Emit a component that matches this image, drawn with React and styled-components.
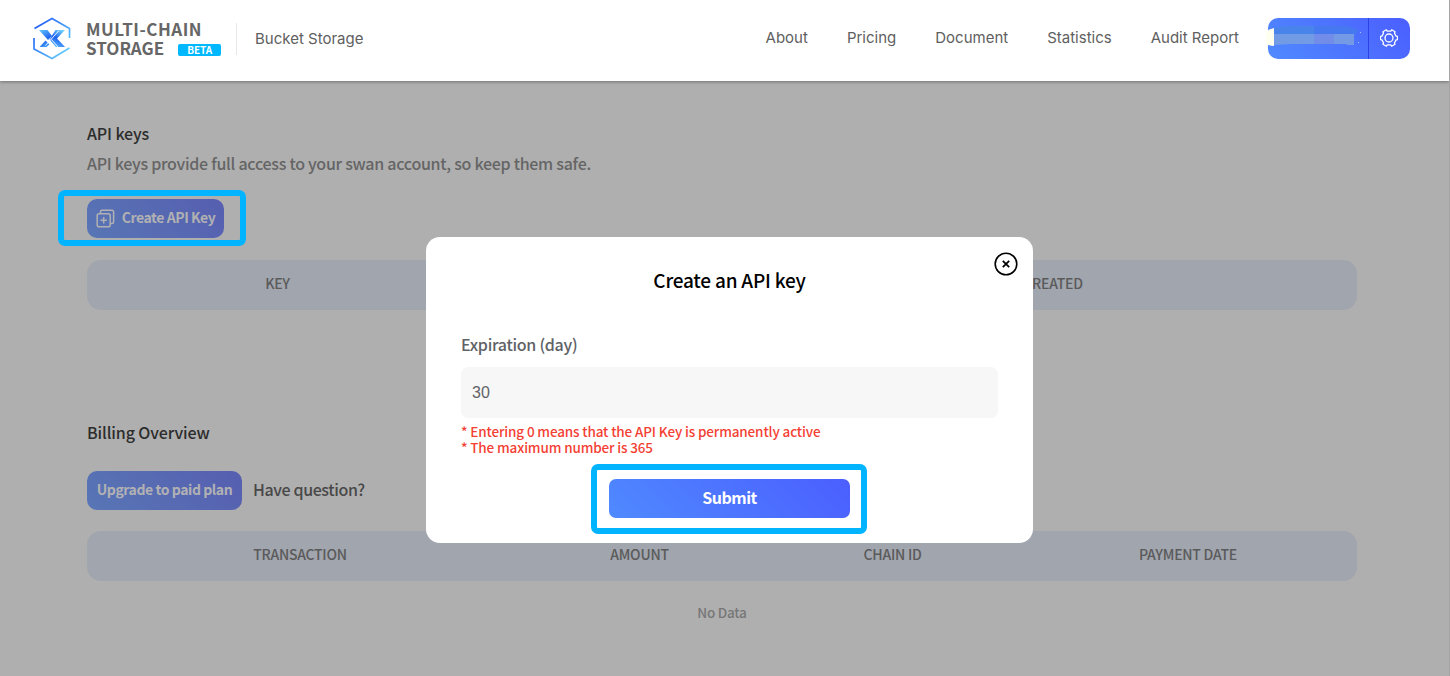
import React from "react";
import styled, { createGlobalStyle } from "styled-components";

const Global = createGlobalStyle`
  * { box-sizing: border-box; }
  body { margin: 0; background: #afafaf; font-family: "Noto Sans CJK SC", sans-serif; font-weight: 500; }
  h1, h2, p { margin: 0; font-weight: 500; }
`;

const Page = styled.div`
  position: relative;
  height: 676px;
  overflow: hidden;
  background: #afafaf;
  border-right: 1px solid #a3a3a3;
`;

const Header = styled.header`
  display: flex;
  align-items: center;
  height: 81px;
  padding: 0 39px 0 32px;
  background: #fff;
  box-shadow: 0 1px 3px rgba(0, 0, 0, 0.35);
  white-space: nowrap;
`;

const Logo = styled.svg`
  flex: none;
  width: 40px;
  height: 44px;
  margin-top: -4px;
`;

const Brand = styled.div`
  width: 150px;
  margin: -5px 0 0 14px;
  color: #666;
  font: 700 17px/19px "Noto Sans CJK SC", sans-serif;
`;

const BrandLine = styled.div`
  display: flex;
  align-items: center;
  height: 19px;
  letter-spacing: ${(p) => p.$track || 0}px;
`;

const Beta = styled.span`
  width: 43px;
  height: 12px;
  margin: 4px 0 0 14px;
  border-radius: 2px;
  background: #00b8ff;
  color: #fff;
  font-size: 10px;
  line-height: 11px;
  letter-spacing: -0.1px;
  text-align: center;
`;

const NavText = styled.span`
  color: #606060;
  font: 400 15px/20px Inter, sans-serif;
  letter-spacing: ${(p) => p.$track || 0}px;
`;

const Product = styled.div`
  display: flex;
  align-items: center;
  height: 32px;
  padding-left: 18px;
  border-left: 1px solid #e8e8e8;
  margin-top: -3px;
`;

const Nav = styled.nav`
  display: flex;
  gap: 39px;
  margin: -5px 29px 0 auto;
`;

const Account = styled.div`
  display: flex;
  width: 142px;
  height: 41px;
  margin-top: -4px;
  border-radius: 10px;
  background: linear-gradient(45deg, #4f8aff, #4b5eff);
`;

const Address = styled.div`
  width: 101px;
  border-right: 1px solid #2e40e8;
`;

const Mask = styled.svg`
  display: block;
  overflow: visible;
`;

const Settings = styled.div`
  display: flex;
  flex: 1;
  align-items: center;
  justify-content: center;
  padding: 0 1px 1px 0;
`;

const Main = styled.main`
  padding: 41px 92px 0 87px;
`;

const Heading = styled.h2`
  color: #2c2c2c;
  font-size: 16px;
  line-height: 22px;
  letter-spacing: ${(p) => p.$track || 0}px;
`;

const Lead = styled.p`
  margin-top: 8px;
  color: #656565;
  font-size: 16px;
  line-height: 22px;
  letter-spacing: ${(p) => p.$track || 0}px;
`;

const Row = styled.div`
  display: flex;
  align-items: center;
  gap: 11px;
  margin-top: ${(p) => p.$top}px;
`;

const Button = styled.div`
  position: relative;
  display: flex;
  align-items: center;
  justify-content: center;
  gap: 7px;
  width: ${(p) => p.$width}px;
  height: 39px;
  border-radius: ${(p) => (p.$bright ? 7 : 10)}px;
  background: ${(p) => p.$bright ? "linear-gradient(45deg, #4f8aff, #4b5eff)" : "linear-gradient(45deg, #5876b5, #565eb0)"};
  color: ${(p) => (p.$bright ? "#fff" : "#b1b1b3")};
  font-size: ${(p) => (p.$bright ? 16 : 14)}px;
  font-weight: 700;
  letter-spacing: ${(p) => p.$track || 0}px;
  white-space: nowrap;
`;

const ButtonText = styled.span`
  padding-bottom: 3px;
`;

const Highlight = styled.div`
  position: absolute;
  top: ${(p) => p.$inset[0]}px;
  right: ${(p) => p.$inset[1]}px;
  bottom: ${(p) => p.$inset[2]}px;
  left: ${(p) => p.$inset[3]}px;
  border: 6px solid #00b4ff;
  border-radius: 7px;
`;

const Question = styled.span`
  padding-bottom: 3px;
  color: #484848;
  font-size: 16px;
  line-height: 22px;
  letter-spacing: ${(p) => p.$track || 0}px;
`;

const TableHead = styled.div`
  display: grid;
  grid-template-columns: ${(p) => p.$cols};
  align-items: center;
  height: 50px;
  margin-top: ${(p) => p.$top}px;
  padding-bottom: 3px;
  border-radius: 14px;
  background: #a1a5ae;
  color: #5a5a5a;
  font-size: 14px;
  line-height: 19px;
  text-align: center;
`;

const Cell = styled.span`
  letter-spacing: -0.25px;
`;

const Empty = styled.div`
  margin-top: 22px;
  color: #777;
  font-size: 13.5px;
  line-height: 19px;
  letter-spacing: -0.25px;
  text-align: center;
`;

const Billing = styled.section`
  margin-top: 111px;
`;

const Modal = styled.div`
  position: absolute;
  top: 237px;
  left: 426px;
  display: flex;
  flex-direction: column;
  width: 607px;
  height: 306px;
  padding: 29px 35px 0;
  border-radius: 14px;
  background: #fff;
`;

const Close = styled.svg`
  position: absolute;
  top: 15px;
  right: 15px;
`;

const ModalTitle = styled.h1`
  color: #000;
  font-size: 19px;
  line-height: 28px;
  text-align: center;
  letter-spacing: ${(p) => p.$track || 0}px;
`;

const Label = styled.label`
  margin-top: 39px;
  color: #606266;
  font-size: 16px;
  line-height: 22px;
  letter-spacing: ${(p) => p.$track || 0}px;
`;

const Field = styled.div`
  flex: none;
  height: 51px;
  margin-top: 12px;
  padding-left: 11px;
  border-radius: 7px;
  background: #f7f7f7;
  color: #606266;
  font: 400 16px/51px "Liberation Sans", Arial, sans-serif;
`;

const Hints = styled.div`
  margin: 5px 0 24px;
  color: #f43f34;
  font-size: 13.5px;
  line-height: 16px;
`;

const Hint = styled.p`
  letter-spacing: -0.15px;
`;

const SubmitRow = styled.div`
  display: flex;
  padding-left: 148px;
`;

function LogoMark() {
  return (
    <Logo viewBox="0 0 40 44" fill="none">
      <defs>
        <linearGradient id="edge" x1="0" y1="8" x2="38" y2="38" gradientUnits="userSpaceOnUse">
          <stop stopColor="#1c55f5" />
          <stop offset="1" stopColor="#69d8ff" />
        </linearGradient>
        <linearGradient id="left" x1="8" y1="12" x2="20" y2="32" gradientUnits="userSpaceOnUse">
          <stop stopColor="#63ccff" />
          <stop offset=".5" stopColor="#2467ee" />
          <stop offset="1" stopColor="#58c6ff" />
        </linearGradient>
        <linearGradient id="right" x1="32" y1="13" x2="23" y2="32" gradientUnits="userSpaceOnUse">
          <stop stopColor="#7de0ff" />
          <stop offset=".5" stopColor="#1e61ef" />
          <stop offset="1" stopColor="#66ceff" />
        </linearGradient>
      </defs>
      <path d="M2.5 11.5 20 1.5 37.5 11.5V21M2 21V32L20 41.5 37.5 31" stroke="url(#edge)" strokeWidth="1.7" />
      <path d="M7 13H15.5L20 19 16 23 7 13ZM13.5 23.5 17.5 27.5 14.5 30H7.5L13.5 23.5Z" fill="url(#left)" />
      <path d="M23.5 13H33L25 21.5 33 30H24L17.5 22.5 23.5 13Z" fill="url(#right)" />
      <path d="M13.5 28.5 27 13.5M19.5 22.5 26 30" stroke="#fff" strokeWidth=".9" />
    </Logo>
  );
}

function AddressMask() {
  return (
    <Mask width="100" height="41" viewBox="0 0 100 41">
      <path d="M5 10Q13 8 27 8H46V17H5Z" fill="#4884e9" />
      <path d="M46 8H70Q86 8 91 13L86 17H46Z" fill="#4678f0" />
      <path d="M5 16H46V26H24L5 27Z" fill="#729be6" />
      <path d="M46 16H66V26H46Z" fill="#718de9" />
      <path d="M66 16H86V27H80L77 26H66Z" fill="#749ae5" />
      <path d="M6 10Q-2 12-2 16V25Q0 28 6 28Z" fill="#fffff0" />
      <path d="M92 14h1v1h-1ZM90 24h1v1h-1Z" fill="#a8c4ff" />
    </Mask>
  );
}

function Gear() {
  return (
    <svg width="18" height="18" viewBox="0 0 18 18" fill="none" stroke="#fff" strokeWidth="1.3" strokeLinejoin="round">
      <path d="M6.3 .8 7.2 2.1H10.8L11.7.8 15 2.7 14.5 4.3 16.1 7.1 17.5 7.4V10.6L16.1 10.9 14.5 13.7 15 15.3 11.7 17.2 10.8 15.9H7.2L6.3 17.2 3 15.3 3.5 13.7 1.9 10.9.5 10.6V7.4L1.9 7.1 3.5 4.3 3 2.7Z" />
      <circle cx="9" cy="9" r="4" />
    </svg>
  );
}

function CopyPlus() {
  return (
    <svg width="19" height="19" viewBox="0 0 19 19" fill="none" stroke="#b1b1b3" strokeWidth="1.5">
      <rect x="1.2" y="4.7" width="13" height="13" rx="1.8" />
      <path d="M4.5 4.5V2.8Q4.5 1.2 6.1 1.2H16Q17.6 1.2 17.6 2.8V13Q17.6 14.6 16 14.6H14.4M7.7 8V14.4M4.5 11.2H10.9" />
    </svg>
  );
}

export default function App() {
  return (
    <>
      <Global />
      <Page>
        <Header>
          <LogoMark />
          <Brand>
            <BrandLine $track={0.5}>MULTI-CHAIN</BrandLine>
            <BrandLine>STORAGE<Beta>BETA</Beta></BrandLine>
          </Brand>
          <Product><NavText>Bucket Storage</NavText></Product>
          <Nav>
            <NavText>About</NavText>
            <NavText>Pricing</NavText>
            <NavText>Document</NavText>
            <NavText>Statistics</NavText>
            <NavText>Audit Report</NavText>
          </Nav>
          <Account>
            <Address><AddressMask /></Address>
            <Settings><Gear /></Settings>
          </Account>
        </Header>
        <Main>
          <Heading $track={-0.12}>API keys</Heading>
          <Lead $track={-0.28}>API keys provide full access to your swan account, so keep them safe.</Lead>
          <Row $top={25}>
            <Button $width={137} $track={-0.42}>
              <CopyPlus />
              <ButtonText>Create API Key</ButtonText>
              <Highlight $inset={[-9, -22, -8, -29]} />
            </Button>
          </Row>
          <TableHead $top={22} $cols="381px 281px 608px">
            <Cell>KEY</Cell>
            <span />
            <Cell>CREATED</Cell>
          </TableHead>
          <Billing>
            <Heading $track={-0.12}>Billing Overview</Heading>
            <Row $top={28}>
              <Button $width={155} $track={-0.42}><ButtonText>Upgrade to paid plan</ButtonText></Button>
              <Question $track={-0.38}>Have question?</Question>
            </Row>
            <TableHead $top={21} $cols="426px 253px 253px 338px">
              <Cell>TRANSACTION</Cell>
              <Cell>AMOUNT</Cell>
              <Cell>CHAIN ID</Cell>
              <Cell>PAYMENT DATE</Cell>
            </TableHead>
            <Empty>No Data</Empty>
          </Billing>
        </Main>
        <Modal>
          <Close width="24" height="24" viewBox="0 0 24 24" fill="none" stroke="#000" strokeWidth="1.6">
            <circle cx="12" cy="12" r="10.8" />
            <path d="M8.8 8.8 15.2 15.2M15.2 8.8 8.8 15.2" strokeWidth="1.8" />
          </Close>
          <ModalTitle $track={-0.22}>Create an API key</ModalTitle>
          <Label $track={-0.28}>Expiration (day)</Label>
          <Field>30</Field>
          <Hints>
            <Hint>* Entering 0 means that the API Key is permanently active</Hint>
            <Hint>* The maximum number is 365</Hint>
          </Hints>
          <SubmitRow>
            <Button $bright $width={241} $track={-0.5}>
              <ButtonText>Submit</ButtonText>
              <Highlight $inset={[-15, -17, -16, -18]} />
            </Button>
          </SubmitRow>
        </Modal>
      </Page>
    </>
  );
}
